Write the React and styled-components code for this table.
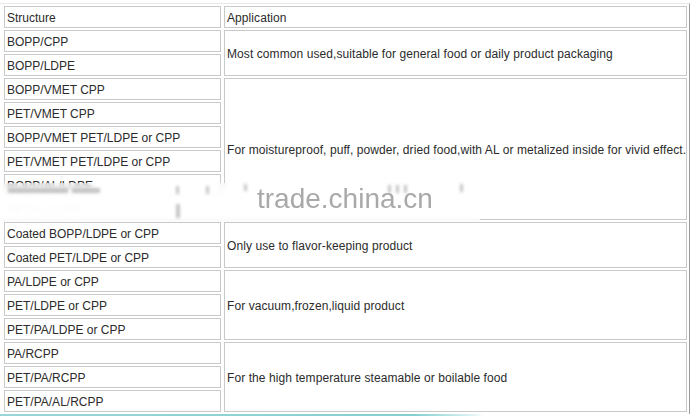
import React from 'react';
import styled, { createGlobalStyle } from 'styled-components';

const GlobalStyle = createGlobalStyle`
  html, body {
    margin: 0;
    padding: 0;
    background: #fff;
  }
  body {
    font-family: "Liberation Sans", Arial, sans-serif;
    font-size: 12px;
    color: #2b2b2b;
  }
`;

const Page = styled.div`
  width: 691px;
  height: 416px;
  overflow: hidden;
  padding-top: 3px;
  box-sizing: border-box;
`;

const Frame = styled.div`
  position: relative;
  width: 689px;
  height: 410px;
  border-top: 1px solid #e8e8e8;
  border-right: 1px solid #9c9c9c;
`;

const Grid = styled.div`
  display: grid;
  grid-template-columns: 217px 463px;
  grid-auto-rows: 22px;
  column-gap: 3px;
  row-gap: 2px;
  padding: 2px 0 0 4px;
`;

const Cell = styled.div`
  grid-column: ${p => p.$col};
  grid-row: ${p => p.$row} / span ${p => p.$span || 1};
  display: flex;
  align-items: center;
  box-sizing: border-box;
  border: 1px solid #c9c9c9;
  padding: 2px 2px 0;
  background: #fff;
  white-space: nowrap;
  line-height: 14px;
  letter-spacing: ${p => (p.$col === 2 ? '0.08px' : '0')};
`;

const BottomLine = styled.div`
  height: 3px;
  width: 691px;
  background: linear-gradient(90deg, #9ad6d8 0%, #86cfd1 60%, #d9f1f2 68%, #fff 70%);
`;

const Fog = styled.div`
  position: absolute;
  left: 0;
  top: 179px;
  width: 480px;
  height: 39px;
  background: linear-gradient(180deg, rgba(255,255,255,0.45) 0%, rgba(255,255,255,0.8) 20%, rgba(255,255,255,0.97) 40%, rgba(255,255,255,0.97) 85%, rgba(255,255,255,0.5) 100%);
  backdrop-filter: blur(2px);
`;

const Ghost = styled.div`
  position: absolute;
  left: ${p => p.$x}px;
  top: ${p => p.$y}px;
  width: ${p => p.$w}px;
  height: ${p => p.$h}px;
  background: #c4c4c4;
  filter: blur(1.5px);
`;

const Watermark = styled.div`
  position: absolute;
  left: 257px;
  top: 179px;
  font-family: "Liberation Sans", Arial, sans-serif;
  font-size: 28px;
  color: #a9a9a9;
  letter-spacing: 0;
`;

const structures = [
  'BOPP/CPP',
  'BOPP/LDPE',
  'BOPP/VMET CPP',
  'PET/VMET CPP',
  'BOPP/VMET PET/LDPE or CPP',
  'PET/VMET PET/LDPE or CPP',
  'BOPP/AL/LDPE',
  'PET/AL/LDPE',
  'Coated BOPP/LDPE or CPP',
  'Coated PET/LDPE or CPP',
  'PA/LDPE or CPP',
  'PET/LDPE or CPP',
  'PET/PA/LDPE or CPP',
  'PA/RCPP',
  'PET/PA/RCPP',
  'PET/PA/AL/RCPP',
];

const applications = [
  { row: 2, span: 2, text: 'Most common used,suitable for general food or daily product packaging' },
  { row: 4, span: 6, text: 'For moistureproof, puff, powder, dried food,with AL or metalized inside for vivid effect.' },
  { row: 10, span: 2, text: 'Only use to flavor-keeping product' },
  { row: 12, span: 3, text: 'For vacuum,frozen,liquid product' },
  { row: 15, span: 3, text: 'For the high temperature steamable or boilable food' },
];

const ghosts = [
  { x: 8, y: 184, w: 60, h: 5 },
  { x: 72, y: 184, w: 28, h: 5 },
  { x: 176, y: 182, w: 3, h: 8 },
  { x: 206, y: 182, w: 3, h: 8 },
  { x: 244, y: 180, w: 3, h: 7 },
  { x: 176, y: 200, w: 4, h: 14 },
  { x: 388, y: 181, w: 3, h: 8 },
  { x: 396, y: 181, w: 3, h: 8 },
  { x: 404, y: 181, w: 3, h: 8 },
  { x: 460, y: 180, w: 3, h: 8 },
];

export default function App() {
  return (
    <>
      <GlobalStyle />
      <Page>
        <Frame>
          <Grid>
            <Cell $col={1} $row={1}>Structure</Cell>
            <Cell $col={2} $row={1}>Application</Cell>
            {structures.map((s, i) => (
              <Cell key={s} $col={1} $row={i + 2}>{s}</Cell>
            ))}
            {applications.map(a => (
              <Cell key={a.row} $col={2} $row={a.row} $span={a.span}>{a.text}</Cell>
            ))}
          </Grid>
          <Fog />
          {ghosts.map((g, i) => (
            <Ghost key={i} $x={g.x} $y={g.y} $w={g.w} $h={g.h} />
          ))}
          <Watermark>trade.china.cn</Watermark>
        </Frame>
        <BottomLine />
      </Page>
    </>
  );
}
